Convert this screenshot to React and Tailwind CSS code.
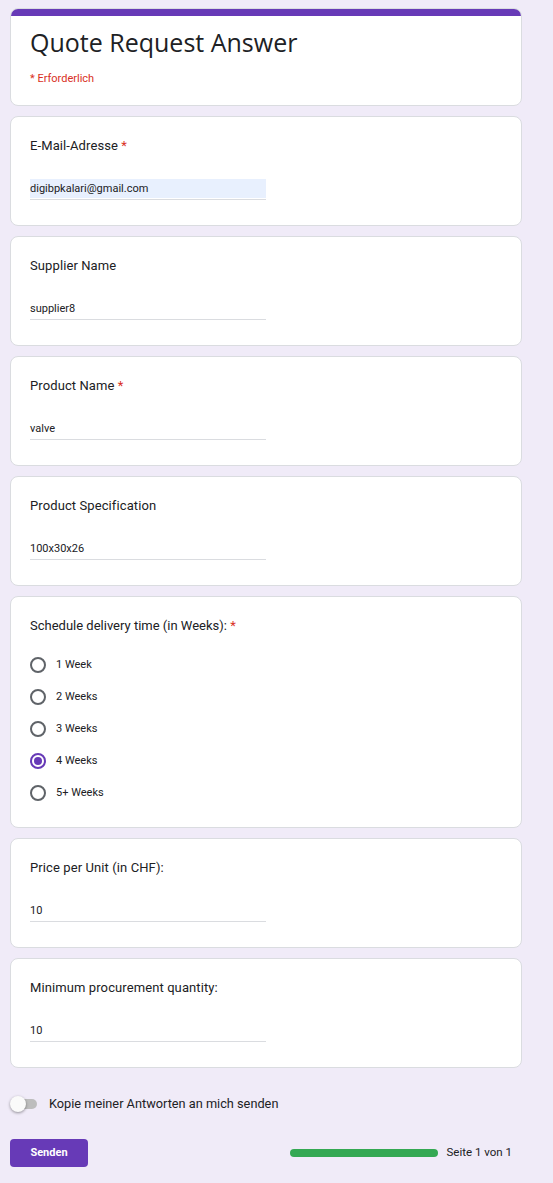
import React from "react";

function Question({ label, required, value, highlight }) {
  return (
    <div className="bg-white rounded-[8px] border border-[#dadce0] px-[19px] pt-[19px] pb-[25px]">
      <div className="text-[13px] leading-[20px] text-[#202124] tracking-[0.1px]" style={{ fontFamily: "Roboto, sans-serif" }}>
        {label}
        {required && <span className="text-[#d93025]"> *</span>}
      </div>
      <div className="mt-[23px] w-[236px] h-[21px] border-b border-[#dadce0]">
        <div className={`h-[19px] ${highlight ? "bg-[#e8f0fe]" : ""} text-[11px] leading-[19px] text-[#202124]`}>
          {value}
        </div>
      </div>
    </div>
  );
}

function Radio({ label, checked }) {
  return (
    <div className="flex items-center h-[32px]">
      <div
        className={`w-[16px] h-[16px] rounded-full border-2 flex items-center justify-center ${
          checked ? "border-[#673ab7]" : "border-[#5f6368]"
        }`}
      >
        {checked && <div className="w-[8px] h-[8px] rounded-full bg-[#673ab7]" />}
      </div>
      <span className="ml-[10px] text-[11px] text-[#202124]">{label}</span>
    </div>
  );
}

export default function App() {
  return (
    <div
      className="min-h-[1183px] w-[553px] bg-[#f0ebf8] pt-[8px] pb-[16px]"
      style={{ fontFamily: "Roboto, 'Liberation Sans', sans-serif" }}
    >
      <div className="ml-[10px] w-[512px] flex flex-col gap-[10px]">
        <div className="bg-white rounded-[8px] border border-[#dadce0] overflow-hidden">
          <div className="h-[8px] bg-[#673ab7] -mx-px -mt-px" />
          <div className="px-[19px] pt-[10px] pb-[18px]">
            <div className="text-[25px] leading-[32px] text-[#202124]" style={{ fontFamily: "'Open Sans', Roboto, sans-serif" }}>
              Quote Request Answer
            </div>
            <div className="mt-[13px] text-[11px] leading-[16px] text-[#d93025]">* Erforderlich</div>
          </div>
        </div>

        <Question label="E-Mail-Adresse" required value="digibpkalari@gmail.com" highlight />
        <Question label="Supplier Name" value="supplier8" />
        <Question label="Product Name" required value="valve" />
        <Question label="Product Specification" value="100x30x26" />

        <div className="bg-white rounded-[8px] border border-[#dadce0] px-[19px] pt-[19px] pb-[18px]">
          <div className="text-[13px] leading-[20px] text-[#202124]">
            Schedule delivery time (in Weeks): <span className="text-[#d93025]">*</span>
          </div>
          <div className="mt-[13px] flex flex-col">
            <Radio label="1 Week" />
            <Radio label="2 Weeks" />
            <Radio label="3 Weeks" />
            <Radio label="4 Weeks" checked />
            <Radio label="5+ Weeks" />
          </div>
        </div>

        <Question label="Price per Unit (in CHF):" value="10" />
        <Question label="Minimum procurement quantity:" value="10" />
      </div>

      <div className="ml-[10px] mt-[26px] flex items-center h-[20px]">
        <div className="relative w-[28px] h-[16px] flex items-center">
          <div className="ml-[3px] w-[24px] h-[10px] rounded-full bg-[#bdbdbd]" />
          <div className="absolute left-0 top-0 w-[16px] h-[16px] rounded-full bg-[#fafafa] shadow-[0_1px_3px_rgba(0,0,0,0.4)]" />
        </div>
        <span className="ml-[11px] text-[12.75px] text-[#202124]">Kopie meiner Antworten an mich senden</span>
      </div>

      <div className="ml-[10px] mt-[25px] w-[502px] flex items-center">
        <button className="w-[78px] h-[28px] rounded-[4px] bg-[#673ab7] text-white text-[11px] font-bold">
          Senden
        </button>
        <div className="ml-auto flex items-center">
          <div className="w-[148px] h-[8px] rounded-full bg-[#34a853]" />
          <span className="ml-[9px] text-[11.5px] text-[#202124]">Seite 1 von 1</span>
        </div>
      </div>
    </div>
  );
}
